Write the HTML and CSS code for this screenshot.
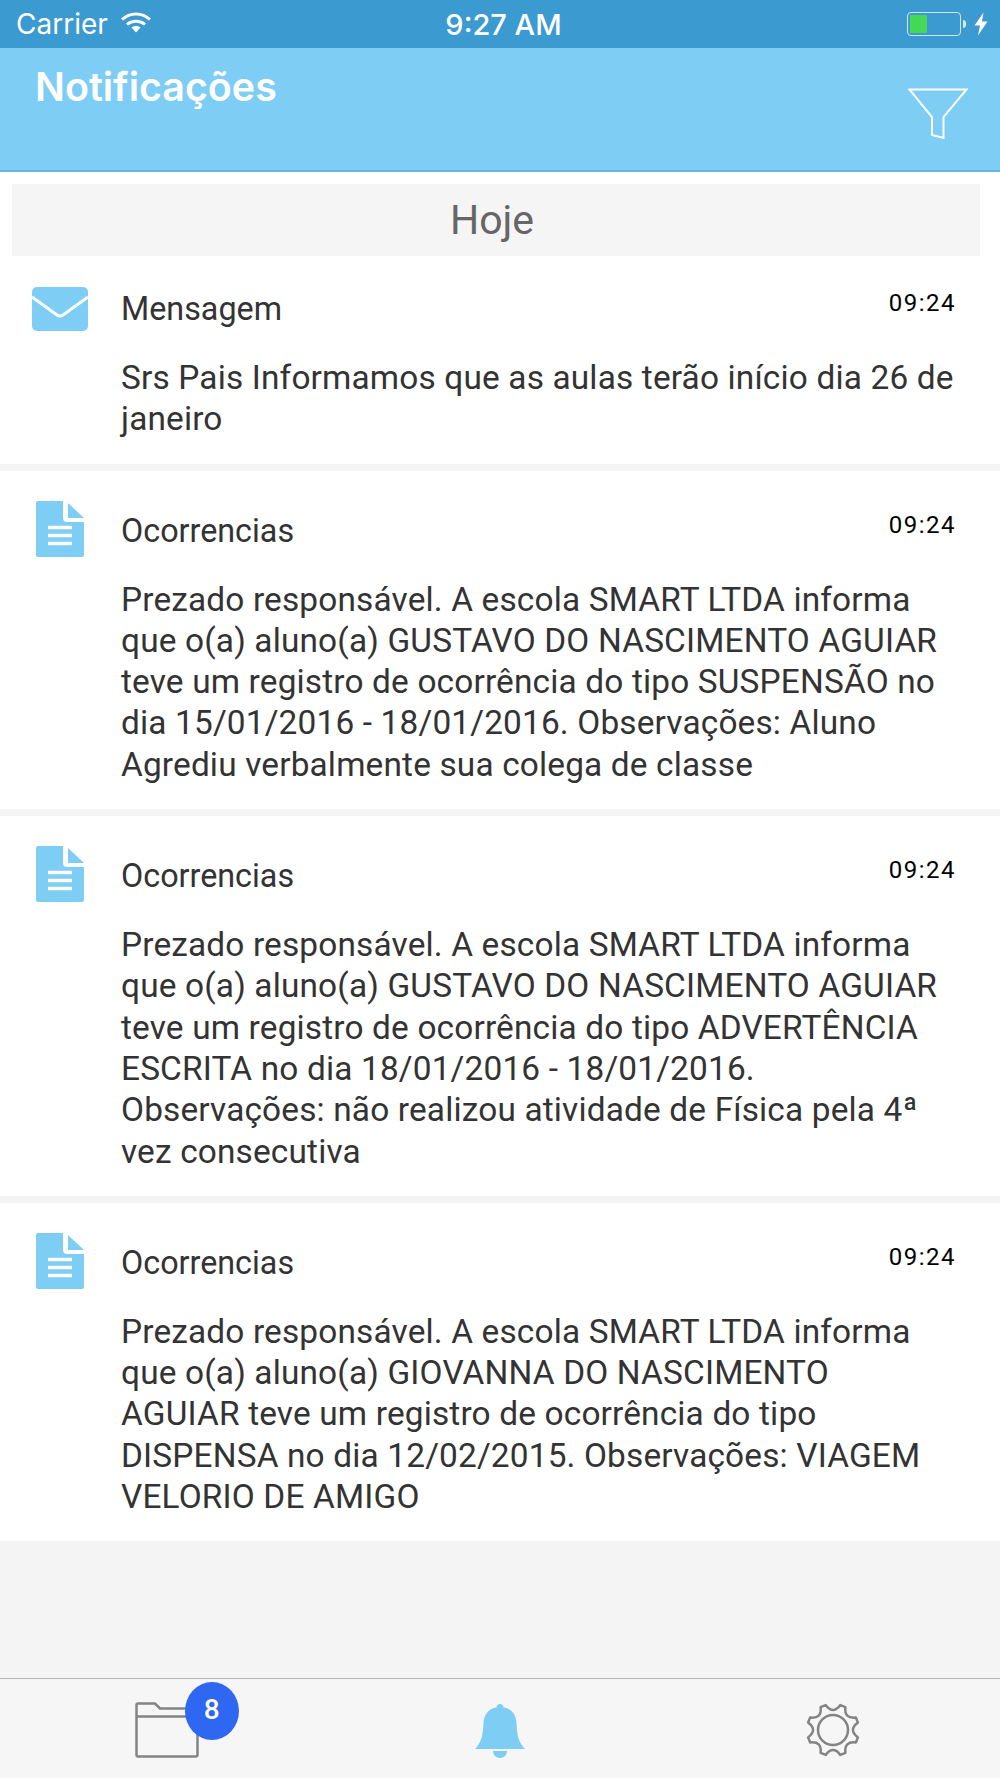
FILE: index.html
```html
<!DOCTYPE html>
<html lang="pt">
<head>
<meta charset="utf-8">
<title>Notificações</title>
<link rel="stylesheet" href="styles.css">
</head>
<body>
<div class="screen">
  <div class="status">
    <div class="status-left">
      <span class="carrier">Carrier</span>
      <svg class="wifi" viewBox="0 0 30 22" width="30" height="22"><path d="M1 8.500C9 1 21 1 29 8.500" fill="none" stroke="#fff" stroke-width="3"/><path d="M6 13.500C11 9 19 9 24 13.500" fill="none" stroke="#fff" stroke-width="3"/><path d="M10.500 16.500C13 14.500 17 14.500 19.500 16.500L15 21.500Z" fill="#fff"/></svg>
    </div>
    <div class="clock">9:27 AM</div>
    <div class="status-right">
      <div class="battery"><div class="battery-fill"></div></div>
      <div class="battery-nub"></div>
      <svg class="bolt" viewBox="0 0 14 24" width="14" height="24"><path d="M9.500 0.500L0.500 13.500H6L4 23.500L13.500 9.500H8Z" fill="#fff"/></svg>
    </div>
  </div>
  <header class="appbar">
    <h1 class="title">Notificações</h1>
    <svg class="filter" viewBox="0 0 60 52" width="60" height="52"><path d="M1.500 1.500H58.500L35.500 29V50L24 47V29Z" fill="none" stroke="#fff" stroke-width="2"/></svg>
  </header>
  <main class="content">
    <div class="day"><div class="day-label">Hoje</div></div>
    <article class="item item-first">
      <svg class="icon icon-mail" viewBox="0 0 56 44" width="56" height="44"><rect width="56" height="44" rx="5" fill="#7dcdf5"/><path d="M0 10L25 28Q28 30 31 28L56 10" fill="none" stroke="#fff" stroke-width="3"/></svg>
      <div class="item-body">
        <div class="item-head"><span class="item-kind">Mensagem</span><time class="item-time">09:24</time></div>
        <p class="item-text">Srs Pais Informamos que as aulas terão início dia 26 de janeiro</p>
      </div>
    </article>
    <article class="item">
      <svg class="icon icon-doc" viewBox="0 0 48 56" width="48" height="56"><path d="M2 0H27V17Q27 21 31 21H48V54Q48 56 46 56H2Q0 56 0 54V2Q0 0 2 0Z" fill="#7dcdf5"/><path d="M32 2L48 17H32Z" fill="#7dcdf5"/><path d="M12 26.500H36M12 34.500H36M12 42.500H36" stroke="#fff" stroke-width="3.500"/></svg>
      <div class="item-body">
        <div class="item-head"><span class="item-kind">Ocorrencias</span><time class="item-time">09:24</time></div>
        <p class="item-text">Prezado responsável. A escola SMART LTDA informa que o(a) aluno(a) GUSTAVO DO NASCIMENTO AGUIAR teve um registro de ocorrência do tipo SUSPENSÃO no dia 15/01/2016 - 18/01/2016. Observações: Aluno Agrediu verbalmente sua colega de classe</p>
      </div>
    </article>
    <article class="item">
      <svg class="icon icon-doc" viewBox="0 0 48 56" width="48" height="56"><path d="M2 0H27V17Q27 21 31 21H48V54Q48 56 46 56H2Q0 56 0 54V2Q0 0 2 0Z" fill="#7dcdf5"/><path d="M32 2L48 17H32Z" fill="#7dcdf5"/><path d="M12 26.500H36M12 34.500H36M12 42.500H36" stroke="#fff" stroke-width="3.500"/></svg>
      <div class="item-body">
        <div class="item-head"><span class="item-kind">Ocorrencias</span><time class="item-time">09:24</time></div>
        <p class="item-text">Prezado responsável. A escola SMART LTDA informa que o(a) aluno(a) GUSTAVO DO NASCIMENTO AGUIAR teve um registro de ocorrência do tipo ADVERTÊNCIA ESCRITA no dia 18/01/2016 - 18/01/2016. Observações: não realizou atividade de Física pela 4ª vez consecutiva</p>
      </div>
    </article>
    <article class="item">
      <svg class="icon icon-doc" viewBox="0 0 48 56" width="48" height="56"><path d="M2 0H27V17Q27 21 31 21H48V54Q48 56 46 56H2Q0 56 0 54V2Q0 0 2 0Z" fill="#7dcdf5"/><path d="M32 2L48 17H32Z" fill="#7dcdf5"/><path d="M12 26.500H36M12 34.500H36M12 42.500H36" stroke="#fff" stroke-width="3.500"/></svg>
      <div class="item-body">
        <div class="item-head"><span class="item-kind">Ocorrencias</span><time class="item-time">09:24</time></div>
        <p class="item-text">Prezado responsável. A escola SMART LTDA informa que o(a) aluno(a) GIOVANNA DO NASCIMENTO AGUIAR teve um registro de ocorrência do tipo DISPENSA no dia 12/02/2015. Observações: VIAGEM VELORIO DE AMIGO</p>
      </div>
    </article>
  </main>
  <nav class="tabbar">
    <div class="tab">
      <div class="tab-folder">
        <svg viewBox="0 0 64 56" width="64" height="56"><path d="M3 1.500H20L25 6.500H62.500V52.500Q62.500 54.500 60.500 54.500H3Q1.500 54.500 1.500 52.500V3Q1.500 1.500 3 1.500ZM1.500 14.500H62.500" fill="none" stroke="#848484" stroke-width="2.500"/></svg>
        <span class="badge">8</span>
      </div>
    </div>
    <div class="tab">
      <svg class="bell" viewBox="0 0 50 56" width="50" height="56"><path d="M25 2C27 2 28.500 3.500 28.500 5.500C36 6.500 41 12 41.500 21C42 32 43 40 50 47H0C7 40 8 32 8.500 21C9 12 14 6.500 21.500 5.500C21.500 3.500 23 2 25 2Z" fill="#7dcdf5"/><path d="M18 49H32C32 53 29 56 25 56C21 56 18 53 18 49Z" fill="#7dcdf5"/></svg>
    </div>
    <div class="tab">
      <svg class="gear" viewBox="0 0 56 56" width="56" height="56"><circle cx="28" cy="28" r="15" fill="none" stroke="#848484" stroke-width="2.500"/><path d="M20.620 3.070Q28 13 35.380 3.070L40.410 5.150Q39 17 50.850 15.590L52.930 20.620Q43 28 52.930 35.380L50.850 40.410Q39 39 40.410 50.850L35.380 52.930Q28 43 20.620 52.930L15.590 50.850Q17 39 5.150 40.410L3.070 35.380Q13 28 3.070 20.620L5.150 15.590Q17 17 15.590 5.150Z" fill="none" stroke="#848484" stroke-width="2.500" stroke-linejoin="round"/></svg>
    </div>
  </nav>
</div>
</body>
</html>
```

FILE: styles.css
```css
* { box-sizing: border-box; }
html, body { margin: 0; padding: 0; }
body { font-family: Roboto, "Liberation Sans", sans-serif; background: #f4f4f4; }
.screen { width: 1000px; height: 1778px; display: flex; flex-direction: column; overflow: hidden; }

.status { height: 48px; background: #3b9ad0; color: #fff; display: flex; align-items: center; justify-content: space-between; position: relative; padding: 0 12px 0 16px; font-family: Inter, sans-serif; }
.status-left { display: flex; align-items: center; gap: 13px; }
.carrier { font-size: 28px; font-weight: 400; }
.wifi { margin-top: -4px; }
.clock { position: absolute; left: 7px; right: 0; text-align: center; font-size: 29px; font-weight: 500; pointer-events: none; }
.status-right { display: flex; align-items: center; }
.battery { width: 54px; height: 24px; border: 1px solid #cfe6f3; border-radius: 4px; padding: 2px; }
.battery-fill { width: 17px; height: 18px; background: #43d858; }
.battery-nub { width: 3px; height: 8px; background: #cfe6f3; border-radius: 0 3px 3px 0; margin: 0 8px 0 2px; }

.appbar { height: 124px; background: #7dcdf5; border-bottom: 2px solid #6cb6dc; display: flex; justify-content: space-between; align-items: flex-start; padding: 13px 32px 0 35px; }
.title { margin: 0; color: #fff; font-family: Inter, sans-serif; font-size: 39.400px; font-weight: 600; line-height: 52px; }
.filter { margin-top: 27px; }

.content { flex: 1; }
.day { background: #fff; padding: 12px 20px 0 12px; }
.day-label { height: 72px; background: #f5f5f5; color: #666; text-align: center; font-size: 41px; line-height: 72px; padding-right: 8px; }
.item { background: #fff; display: flex; margin-bottom: 7px; padding: 30px 42px 24px 32px; }
.item-first { padding-top: 23px; }
.icon { flex: none; }
.icon-mail { margin: 8px 33px 0 0; }
.icon-doc { margin: 0 37px 0 4px; }
.item-body { flex: 1; min-width: 0; }
.item-head { display: flex; justify-content: space-between; height: 78px; }
.item-kind { color: #333; font-size: 32.300px; line-height: 61px; }
.item-time { color: #000; font-size: 24px; line-height: 48px; letter-spacing: 1.500px; margin-right: 2px; }
.item-text { margin: 0 3.700px 0 0; color: #333; font-size: 33.400px; line-height: 41.300px; letter-spacing: 0.160px; }

.tabbar { height: 100px; background: #f6f6f6; border-top: 1px solid #b4b4b4; display: grid; grid-template-columns: repeat(3, 1fr); }
.tab { display: flex; justify-content: center; padding-top: 23px; }
.tab-folder { position: relative; width: 64px; height: 56px; }
.badge { position: absolute; left: 50px; top: -20px; width: 54px; height: 58px; border-radius: 50%; background: #2e67f2; color: #fff; font-size: 28px; font-weight: 500; text-align: center; line-height: 56px; }
```
